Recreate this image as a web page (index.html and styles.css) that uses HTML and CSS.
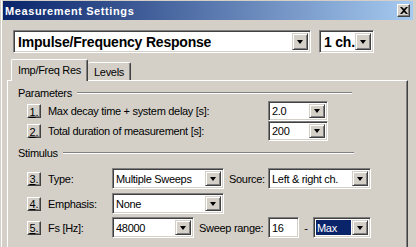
FILE: index.html
```html
<!DOCTYPE html>
<html lang="en">
  <head>
    <meta charset="UTF-8" />
    <title>Measurement Settings</title>
    <link rel="stylesheet" href="styles.css">
  </head>
  <body>
    <div class="window">
      <div class="titlebar">
        <span class="title">Measurement Settings</span>
        <span class="close">
          <svg width="8" height="7" viewBox="0 0 8 7"><path d="M0 0h2l2 2 2-2h2L5 3.5 8 7H6L4 5 2 7H0l3-3.5z" fill="#000"/></svg>
        </span>
      </div>

      <div class="client">
        <div class="mode-row">
          <div class="combo combo-mode"><span class="value">Impulse/Frequency Response</span><span class="drop"></span></div>
          <div class="combo combo-ch"><span class="value">1 ch.</span><span class="drop"></span></div>
        </div>

        <div class="tabs">
          <div class="tab active">Imp/Freq Res</div>
          <div class="tab">Levels</div>
        </div>

        <div class="panel">
          <div class="group-head head-params"><span>Parameters</span><div class="etch"></div></div>

          <div class="row row-param">
            <span class="num"><u>1</u>.</span>
            <span class="label label-long">Max decay time + system delay [s]:</span>
            <div class="combo combo-small"><span class="value">2.0</span><span class="drop"></span></div>
          </div>
          <div class="row row-param">
            <span class="num"><u>2</u>.</span>
            <span class="label label-long">Total duration of measurement [s]:</span>
            <div class="combo combo-small"><span class="value">200</span><span class="drop"></span></div>
          </div>

          <div class="group-head head-stim"><span>Stimulus</span><div class="etch"></div></div>

          <div class="row row-stim">
            <span class="num"><u>3</u>.</span>
            <span class="label label-short">Type:</span>
            <div class="combo combo-type"><span class="value">Multiple Sweeps</span><span class="drop"></span></div>
            <span class="label label-source">Source:</span>
            <div class="combo combo-source"><span class="value">Left &amp; right ch.</span><span class="drop"></span></div>
          </div>
          <div class="row row-stim row-gap4">
            <span class="num"><u>4</u>.</span>
            <span class="label label-short">Emphasis:</span>
            <div class="combo combo-type"><span class="value">None</span><span class="drop"></span></div>
          </div>
          <div class="row row-stim">
            <span class="num"><u>5</u>.</span>
            <span class="label label-short">Fs [Hz]:</span>
            <div class="combo combo-fs"><span class="value">48000</span><span class="drop"></span></div>
            <span class="label label-sweep">Sweep range:</span>
            <div class="field field-from">16</div>
            <span class="dash">-</span>
            <div class="combo combo-max"><span class="value selected">Max</span><span class="drop"></span></div>
          </div>
        </div>
      </div>
    </div>
  </body>
</html>
```

FILE: styles.css
```css
body {
  margin: 0;
  background: #d4d0c8;
  font-family: "Liberation Sans", Arial, sans-serif;
  font-size: 11px;
  letter-spacing: -0.3px;
  color: #000;
}
.window {
  width: 416px;
  height: 247px;
  box-sizing: border-box;
  padding: 1px 3px 0 3px;
  overflow: hidden;
  background: #d4d0c8;
  box-shadow: inset 1px 0 #d4d0c8, inset 2px 0 #fff;
}
.titlebar {
  height: 19px;
  display: flex;
  align-items: center;
  padding: 0 3px 0 2px;
  background: linear-gradient(to right, #0a246a, #a6caf0);
}
.title {
  flex: 1;
  color: #fff;
  font-weight: bold;
  letter-spacing: 0.6px;
}
.close {
  width: 13px;
  height: 13px;
  box-sizing: border-box;
  display: flex;
  align-items: center;
  justify-content: center;
  background: #d4d0c8;
  border: 1px solid;
  border-color: #fff #404040 #404040 #fff;
  box-shadow: inset -1px -1px #808080;
}
.client {
  padding: 0 4px 0 4px;
}
.mode-row {
  display: flex;
  margin-top: 10px;
  padding-left: 6px;
  gap: 8px;
}

/* sunken combo box */
.combo,
.field {
  box-sizing: border-box;
  display: flex;
  align-items: center;
  background: #fff;
  border: 1px solid;
  border-color: #808080 #fff #fff #808080;
  box-shadow: inset 1px 1px #404040, inset -1px -1px #d4d0c8;
  padding: 2px;
}
.combo .value {
  flex: 1;
  padding-left: 1px;
  white-space: nowrap;
  overflow: hidden;
}
.drop {
  width: 16px;
  align-self: stretch;
  box-sizing: border-box;
  background: #d4d0c8;
  border: 1px solid;
  border-color: #d4d0c8 #404040 #404040 #d4d0c8;
  box-shadow: inset 1px 1px #fff, inset -1px -1px #808080;
  display: flex;
  align-items: center;
  justify-content: center;
}
.drop::after {
  content: "";
  border-style: solid;
  border-width: 4px 3.5px 0 3.5px;
  border-color: #000 transparent transparent transparent;
}
.combo-mode {
  width: 298px;
  height: 23px;
  font-size: 14px;
  font-weight: bold;
  letter-spacing: -0.2px;
}
.combo-ch {
  width: 55px;
  height: 23px;
  font-size: 14px;
  font-weight: bold;
  letter-spacing: -0.2px;
}
.combo-mode .value,
.combo-ch .value {
  padding-left: 2px;
}

/* tabs */
.tabs {
  display: flex;
  align-items: flex-end;
  height: 21px;
  margin-top: 6px;
  padding-left: 4px;
  position: relative;
  z-index: 1;
}
.tab {
  height: 18px;
  box-sizing: border-box;
  padding: 3px 6px 0 6px;
  white-space: nowrap;
  border-top: 1px solid #fff;
  border-left: 1px solid #fff;
  border-right: 1px solid #404040;
  box-shadow: inset -1px 0 #808080;
  border-radius: 2px 2px 0 0;
}
.tab.active {
  height: 22px;
  margin-bottom: -1px;
  padding: 4px 6px 0 6px;
  background: #d4d0c8;
}
.tab + .tab {
  border-left: none;
}

/* tab page */
.panel {
  height: 200px;
  margin-right: 1px;
  border-top: 1px solid #fff;
  border-left: 1px solid #fff;
  border-right: 1px solid #404040;
  box-shadow: inset -1px 0 #808080;
  padding: 5px 0 0 10px;
}
.group-head {
  display: flex;
  align-items: center;
  height: 13px;
}
.group-head .etch {
  height: 0;
  border-top: 1px solid #808080;
  border-bottom: 1px solid #fff;
  margin-left: 5px;
}
.head-params .etch {
  width: 275px;
}
.head-stim {
  margin-top: 5px;
}
.head-stim .etch {
  width: 291px;
}
.row {
  display: flex;
  align-items: center;
  padding-left: 9px;
}
.row-param {
  height: 20px;
}
.head-params + .row {
  margin-top: 2px;
}
.row-stim {
  height: 21px;
  margin-top: 3px;
}
.head-stim + .row {
  margin-top: 9px;
}
.row-gap4 {
  margin-top: 4px;
}
.num {
  width: 14px;
  height: 14px;
  box-sizing: border-box;
  border: 1px solid;
  border-color: #fff #404040 #404040 #fff;
  box-shadow: inset -1px -1px #808080;
  display: flex;
  align-items: center;
  justify-content: center;
  padding-top: 1px;
  letter-spacing: 0;
}
.label {
  margin-left: 7px;
  white-space: nowrap;
}
.label-long {
  width: 220px;
}
.label-short {
  width: 64px;
}
.combo-small {
  width: 60px;
  height: 20px;
}
.combo-type {
  width: 112px;
  height: 21px;
}
.label-source {
  margin-left: 5px;
  width: 39px;
}
.combo-source {
  width: 103px;
  height: 21px;
}
.combo-fs {
  width: 82px;
  height: 21px;
}
.label-sweep {
  margin-left: 5px;
  width: 69px;
}
.field-from {
  width: 31px;
  height: 21px;
  padding-left: 3px;
}
.dash {
  width: 14px;
  text-align: center;
}
.combo-max {
  width: 58px;
  height: 21px;
}
.combo-max .value.selected {
  background: #0a246a;
  color: #fff;
  align-self: stretch;
  display: flex;
  align-items: center;
  margin-right: 1px;
}
```
